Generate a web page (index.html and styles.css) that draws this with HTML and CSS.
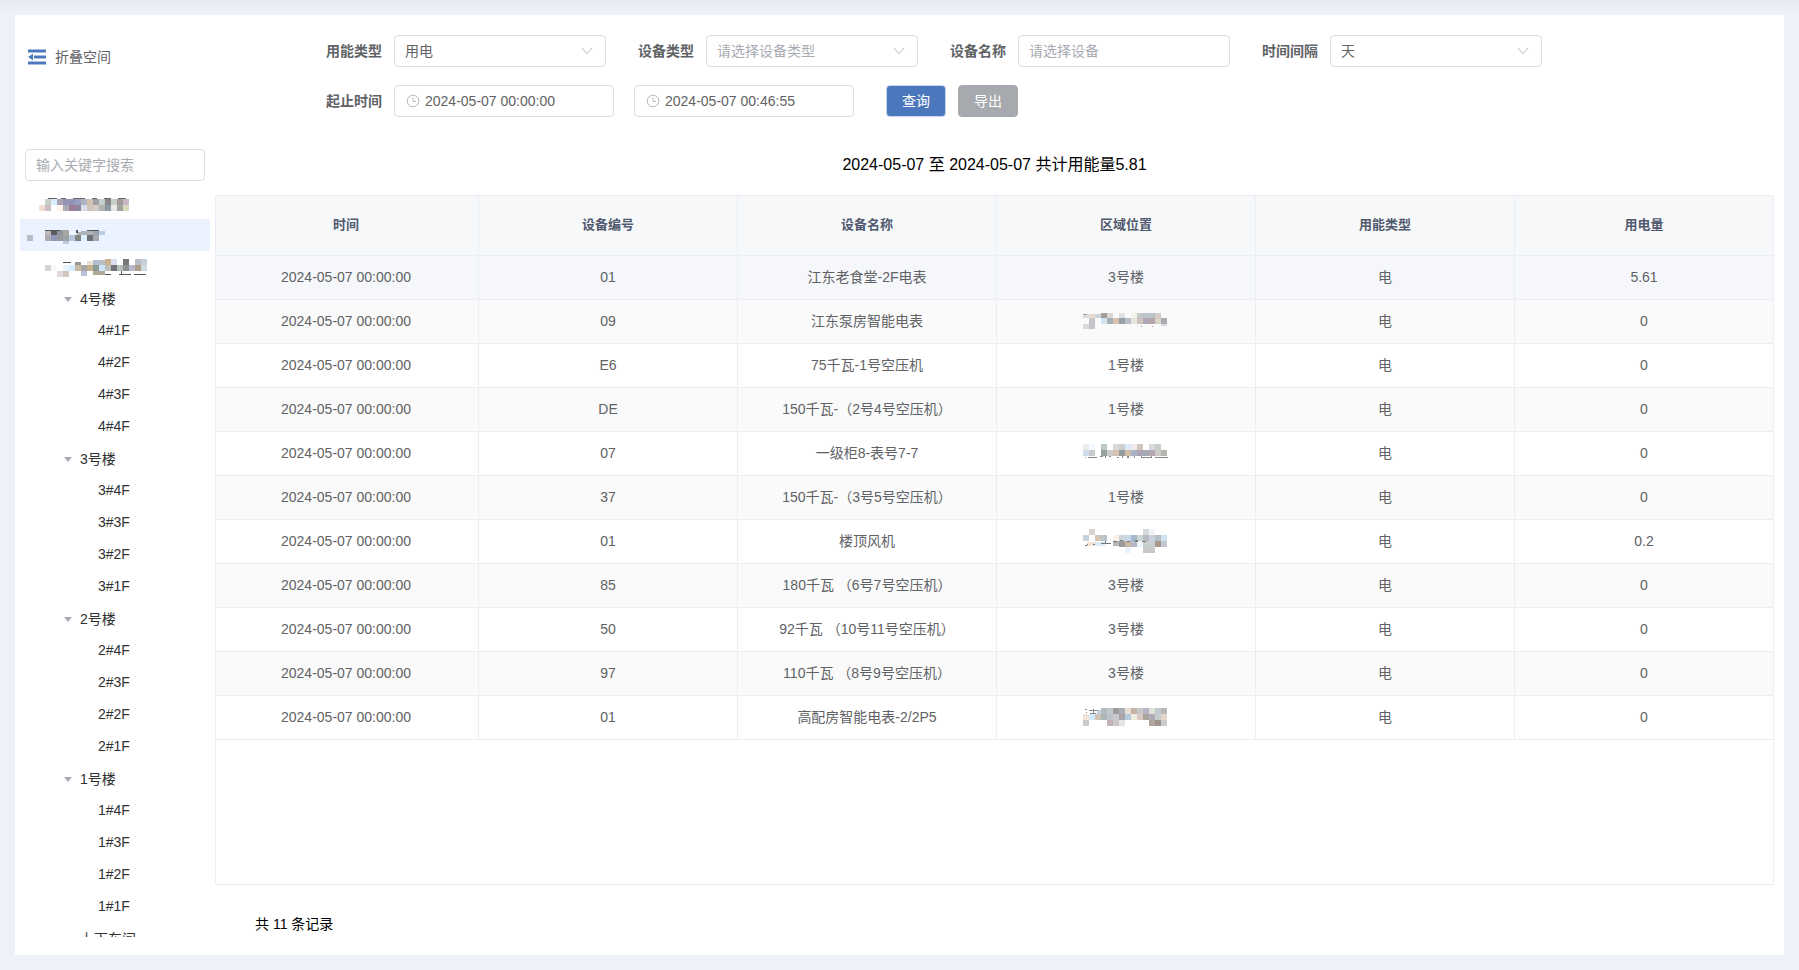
FILE: index.html
```html
<!DOCTYPE html>
<html lang="zh-CN">
<head>
<meta charset="utf-8">
<title>用能统计</title>
<link rel="stylesheet" href="styles.css">
</head>
<body>
<div class="card">
  <button class="fold" type="button">
    <svg class="fold-icon" width="18" height="16" viewBox="0 0 18 16" shape-rendering="crispEdges" aria-hidden="true">
      <path fill="#4b77bd" d="M0 1h18v2H0zM6 7h12v2H6zM0 13h18v2H0z"/>
      <path fill="#a9c0e3" d="M0 0h18v1H0zM0 3h18v1H0zM6 6h12v1H6zM6 9h12v1H6zM0 12h18v1H0zM0 15h18v1H0z"/>
      <path fill="#4b77bd" shape-rendering="auto" d="M0 8l5-3.2v6.4z"/>
    </svg>
    <span>折叠空间</span>
  </button>

  <form class="filters">
    <div class="filter-row">
      <div class="field">
        <label for="energy">用能类型</label>
        <span class="control select"><select id="energy"><option>用电</option></select>
          <svg class="chevron" viewBox="0 0 12 8"><path d="M1 1l5 5.5L11 1"/></svg></span>
      </div>
      <div class="field">
        <label for="kind">设备类型</label>
        <span class="control select"><select id="kind" class="empty"><option>请选择设备类型</option></select>
          <svg class="chevron" viewBox="0 0 12 8"><path d="M1 1l5 5.5L11 1"/></svg></span>
      </div>
      <div class="field">
        <label for="device">设备名称</label>
        <span class="control"><input id="device" type="text" placeholder="请选择设备"></span>
      </div>
      <div class="field">
        <label for="interval">时间间隔</label>
        <span class="control select"><select id="interval"><option>天</option></select>
          <svg class="chevron" viewBox="0 0 12 8"><path d="M1 1l5 5.5L11 1"/></svg></span>
      </div>
    </div>
    <div class="filter-row">
      <div class="field">
        <label for="start">起止时间</label>
        <span class="control date"><svg class="clock" viewBox="0 0 14 14"><circle cx="7" cy="7" r="5.8"/><path d="M7 3.5V7.5H10"/></svg>
          <input id="start" type="text" value="2024-05-07 00:00:00"></span>
        <span class="control date"><svg class="clock" viewBox="0 0 14 14"><circle cx="7" cy="7" r="5.8"/><path d="M7 3.5V7.5H10"/></svg>
          <input type="text" value="2024-05-07 00:46:55" aria-label="结束时间"></span>
      </div>
      <div class="actions">
        <button class="btn primary" type="button">查询</button>
        <button class="btn muted" type="button">导出</button>
      </div>
    </div>
  </form>

  <aside class="side">
    <input class="search" type="text" placeholder="输入关键字搜索" aria-label="输入关键字搜索">
    <ul class="tree">
      <li><svg class="mosaic" width="190" height="32" viewBox="0 0 190 32">
        <path fill="#666" d="M28 11h9v1h-9zM41 11h5v1h-5zM53 11h12v1H53zM72 11h5v1h-5zM84 11h7v1h-7zM98 11h8v1h-8z"/>
        <path fill="#c9cfc8" d="M25 12h6v6h-6zM91 12h6v6h-6z"/><path fill="#d9efff" d="M31 12h6v6h-6z"/><path fill="#a9a3b3" d="M37 12h6v6h-6z"/><path fill="#9793b5" d="M43 12h6v6h-6z"/><path fill="#8f94b8" d="M49 12h6v6h-6z"/><path fill="#979fbe" d="M55 12h6v6h-6z"/><path fill="#adb5c4" d="M61 12h6v6h-6z"/><path fill="#d3c1b3" d="M67 12h6v6h-6z"/><path fill="#9da1a4" d="M73 12h6v6h-6z"/><path fill="#c5cdcd" d="M79 12h6v6h-6z"/><path fill="#8a8689" d="M85 12h6v6h-6z"/><path fill="#a49a9a" d="M97 12h6v6h-6z"/><path fill="#c8b8c8" d="M103 12h6v6h-6z"/>
        <path fill="#f0ddd2" d="M19 18h6v6h-6z"/><path fill="#cbbfc4" d="M25 18h6v6h-6z"/><path fill="#fff3ea" d="M37 18h6v6h-6z"/><path fill="#acacb9" d="M43 18h6v6h-6z"/><path fill="#9f7b98" d="M49 18h6v6h-6z"/><path fill="#8f869b" d="M55 18h6v6h-6z"/><path fill="#d6dce8" d="M61 18h6v6h-6z"/><path fill="#cdc5ba" d="M67 18h6v6h-6z"/><path fill="#d5cbc6" d="M73 18h6v6h-6z"/><path fill="#b2b1b0" d="M79 18h6v6h-6z"/><path fill="#8b98a8" d="M85 18h6v6h-6z"/><path fill="#e9e8e4" d="M91 18h6v6h-6z"/><path fill="#9ea69f" d="M97 18h6v6h-6z"/><path fill="#d9dabb" d="M103 18h6v6h-6z"/>
      </svg></li>
      <li class="current"><svg class="mosaic" width="190" height="32" viewBox="0 0 190 32">
        <path fill="#b9bcc6" d="M7 16h6v6H7z"/><path fill="#bdb9b5" d="M25 11h6v5h-6z"/><path fill="#5c5c5e" d="M31 11h6v5h-6z"/><path fill="#8f94a0" d="M37 11h6v5h-6z"/><path fill="#a9a7a3" d="M43 11h6v5h-6z"/><path fill="#acb3ba" d="M57 13h4v3h-4zM61 12h12v4H61z"/><path fill="#9ba3ab" d="M73 12h6v4h-6z"/><path fill="#b9cee6" d="M79 12h6v4h-6z"/>
        <path fill="#abadb2" d="M25 16h6v6h-6z"/><path fill="#8f98b8" d="M31 16h6v6h-6z"/><path fill="#979a9d" d="M37 16h6v6h-6z"/><path fill="#9fa0a1" d="M43 16h6v6h-6z"/><path fill="#b5c6d8" d="M49 16h6v6h-6z"/><path fill="#7f8684" d="M55 16h6v6h-6z"/><path fill="#dcefff" d="M61 16h6v6h-6zM55 22h6v2h-6z"/><path fill="#6c7073" d="M67 16h6v6h-6z"/><path fill="#a3a8ae" d="M73 16h6v6h-6z"/><path fill="#bccbda" d="M43 22h6v3h-6z"/>
        <path fill="#555" d="M25 11h15v1H25zM56 11h2v3h-2zM67 11h12v1H67z"/>
      </svg></li>
      <li><svg class="mosaic" width="190" height="32" viewBox="0 0 190 32">
        <path fill="#555" d="M43 11h8v1h-8zM85 23h6v1h-6zM99 23h12v1H99zM114 23h12v1h-12zM101 20h1v4h-1z"/>
        <path fill="#9c9494" d="M55 11h6v3h-6z"/><path fill="#ece0d0" d="M67 10h6v4h-6z"/><path fill="#b0bfd0" d="M73 9h6v5h-6z"/><path fill="#b9bfc4" d="M79 9h6v5h-6zM115 8h6v6h-6z"/><path fill="#c9b08f" d="M85 8h6v6h-6z"/><path fill="#dcdff0" d="M91 8h6v6h-6z"/><path fill="#767878" d="M103 8h6v6h-6z"/><path fill="#c5cdd8" d="M121 8h6v6h-6z"/>
        <path fill="#d4d5d9" d="M25 14h6v6h-6z"/><path fill="#fafafa" d="M31 14h6v6h-6z"/><path fill="#e8f5ff" d="M43 14h6v6h-6z"/><path fill="#d4edff" d="M49 14h6v6h-6z"/><path fill="#c7b9a2" d="M55 14h6v6h-6z"/><path fill="#a6a7a4" d="M61 14h6v6h-6z"/><path fill="#c5b090" d="M67 14h6v6h-6z"/><path fill="#8d9994" d="M73 14h6v6h-6z"/><path fill="#cde3fa" d="M79 14h6v6h-6z"/><path fill="#bfbeb8" d="M85 14h6v6h-6z"/><path fill="#707278" d="M91 14h6v6h-6z"/><path fill="#b3c0b9" d="M97 14h6v6h-6z"/><path fill="#8a9190" d="M103 14h6v6h-6z"/><path fill="#bcb6cb" d="M109 14h6v6h-6z"/><path fill="#aaa08d" d="M115 14h6v6h-6z"/><path fill="#cedadd" d="M121 14h6v6h-6z"/>
        <path fill="#e2d8dc" d="M37 20h6v6h-6z"/><path fill="#cfc7bf" d="M43 20h6v6h-6z"/><path fill="#b9c0d3" d="M61 20h6v5h-6z"/><path fill="#b0a898" d="M73 20h12v4H73z"/>
      </svg></li>
      <li class="branch"><span class="caret"></span>4号楼</li>
      <li class="leaf">4#1F</li>
      <li class="leaf">4#2F</li>
      <li class="leaf">4#3F</li>
      <li class="leaf">4#4F</li>
      <li class="branch"><span class="caret"></span>3号楼</li>
      <li class="leaf">3#4F</li>
      <li class="leaf">3#3F</li>
      <li class="leaf">3#2F</li>
      <li class="leaf">3#1F</li>
      <li class="branch"><span class="caret"></span>2号楼</li>
      <li class="leaf">2#4F</li>
      <li class="leaf">2#3F</li>
      <li class="leaf">2#2F</li>
      <li class="leaf">2#1F</li>
      <li class="branch"><span class="caret"></span>1号楼</li>
      <li class="leaf">1#4F</li>
      <li class="leaf">1#3F</li>
      <li class="leaf">1#2F</li>
      <li class="leaf">1#1F</li>
      <li class="branch"><span class="caret none"></span>上下车间</li>
    </ul>
  </aside>

  <main class="main">
    <h1 class="summary">2024-05-07 至 2024-05-07 共计用能量5.81</h1>
    <div class="table-box">
      <table class="table">
        <colgroup><col class="col-time"><col><col><col><col><col></colgroup>
        <thead><tr><th>时间</th><th>设备编号</th><th>设备名称</th><th>区域位置</th><th>用能类型</th><th>用电量</th></tr></thead>
        <tbody>
          <tr class="hover"><td>2024-05-07 00:00:00</td><td>01</td><td>江东老食堂-2F电表</td><td>3号楼</td><td>电</td><td>5.61</td></tr>
          <tr><td>2024-05-07 00:00:00</td><td>09</td><td>江东泵房智能电表</td><td><svg class="mosaic" width="86" height="24" viewBox="0 0 86 24">
            <path fill="#d8dde2" d="M0 5h6v4H0z"/><path fill="#ead9d0" d="M6 5h6v4H6z"/><path fill="#ccd3dc" d="M12 5h6v4h-6z"/><path fill="#a59c9c" d="M18 4h6v5h-6z"/><path fill="#d8d8d2" d="M24 4h6v5h-6z"/><path fill="#e2e2e4" d="M36 4h6v5h-6z"/><path fill="#f7f2e8" d="M48 4h6v5h-6z"/><path fill="#c5c8c6" d="M54 4h6v5h-6z"/><path fill="#bcc4ca" d="M60 4h12v5H60z"/><path fill="#d3cdc8" d="M72 4h6v5h-6z"/>
            <path fill="#c5c6ca" d="M6 9h6v11H6z"/><path fill="#d3e3ef" d="M18 9h6v6h-6z"/><path fill="#a6b1b6" d="M24 9h6v6h-6z"/><path fill="#d8c2b2" d="M30 9h6v6h-6z"/><path fill="#979fa8" d="M36 9h6v6h-6z"/><path fill="#b9bec8" d="M42 9h6v6h-6z"/><path fill="#e3e5dc" d="M48 9h6v6h-6z"/><path fill="#d0c3bf" d="M54 9h6v6h-6z"/><path fill="#ada7b8" d="M60 9h6v6h-6z"/><path fill="#b5a5ab" d="M66 9h6v6h-6z"/><path fill="#d8d6c9" d="M72 9h6v6h-6z"/><path fill="#a9aab0" d="M78 9h6v6h-6z"/><path fill="#d8d8dc" d="M0 15h6v5H0zM78 15h6v2h-6z"/><path fill="#999" d="M0 5h4v1H0zM58 17h1v1h-1zM69 17h1v1h-1z"/>
          </svg></td><td>电</td><td>0</td></tr>
          <tr><td>2024-05-07 00:00:00</td><td>E6</td><td>75千瓦-1号空压机</td><td>1号楼</td><td>电</td><td>0</td></tr>
          <tr><td>2024-05-07 00:00:00</td><td>DE</td><td>150千瓦-（2号4号空压机）</td><td>1号楼</td><td>电</td><td>0</td></tr>
          <tr><td>2024-05-07 00:00:00</td><td>07</td><td>一级柜8-表号7-7</td><td><svg class="mosaic" width="86" height="24" viewBox="0 0 86 24">
            <path fill="#ededE8" d="M0 3h6v6H0z"/><path fill="#f4faff" d="M6 3h6v6H6z"/><path fill="#bcc8cc" d="M18 3h6v6h-6z"/><path fill="#d5d8d8" d="M30 3h6v6h-6z"/><path fill="#cfd0d2" d="M36 3h6v6h-6z"/><path fill="#dceaf6" d="M42 3h6v6h-6z"/><path fill="#f0ecee" d="M48 3h6v6h-6z"/><path fill="#d3c4c0" d="M54 3h6v6h-6z"/><path fill="#d4dae2" d="M66 3h6v6h-6z"/><path fill="#cbcccc" d="M72 3h6v6h-6z"/>
            <path fill="#d0dceb" d="M0 9h6v6H0z"/><path fill="#c8cacd" d="M6 9h6v6H6z"/><path fill="#9aa0a0" d="M18 9h6v6h-6z"/><path fill="#cbcbcc" d="M24 9h6v6h-6z"/><path fill="#d5c2b3" d="M30 9h6v6h-6z"/><path fill="#9599a0" d="M36 9h6v6h-6z"/><path fill="#d0bda8" d="M42 9h6v6h-6z"/><path fill="#a9b2c8" d="M48 9h6v6h-6z"/><path fill="#ada5b6" d="M54 9h6v6h-6z"/><path fill="#a9a8b6" d="M60 9h6v6h-6z"/><path fill="#b5a8b0" d="M66 9h6v6h-6z"/><path fill="#c9cac9" d="M72 9h6v6h-6z"/><path fill="#b3b7b0" d="M78 9h6v6h-6z"/>
            <path fill="#888" d="M2 16h1v1H2zM5 16h9v1H5zM17 15h3v1h-3zM22 15h1v2h-1zM26 15h2v1h-2zM34 16h2v1h-2zM39 15h1v2h-1zM44 15h2v2h-2zM51 15h1v2h-1zM58 15h1v2h-1zM59 16h9v1h-9zM68 15h1v2h-1zM72 16h13v1H72z"/>
          </svg></td><td>电</td><td>0</td></tr>
          <tr><td>2024-05-07 00:00:00</td><td>37</td><td>150千瓦-（3号5号空压机）</td><td>1号楼</td><td>电</td><td>0</td></tr>
          <tr><td>2024-05-07 00:00:00</td><td>01</td><td>楼顶风机</td><td><svg class="mosaic" width="86" height="24" viewBox="0 0 86 24">
            <path fill="#dad4cc" d="M6 0h6v6H6z"/><path fill="#d5d8dc" d="M60 0h6v6h-6z"/><path fill="#f3f3f6" d="M66 0h6v6h-6z"/><path fill="#c8d2db" d="M0 6h6v6H0z"/><path fill="#d5c3b3" d="M12 6h6v6h-6z"/><path fill="#b9c3ca" d="M18 6h6v6h-6z"/><path fill="#fbf2e6" d="M30 6h6v6h-6z"/><path fill="#c9d6dc" d="M36 6h6v6h-6z"/><path fill="#c8d8e6" d="M42 6h6v6h-6z"/><path fill="#a5b8cc" d="M48 6h6v6h-6z"/><path fill="#ccd6d6" d="M54 6h6v6h-6z"/><path fill="#b8bcc2" d="M60 6h6v6h-6z"/><path fill="#c8d0dc" d="M66 6h6v6h-6z"/><path fill="#b3c0c8" d="M72 6h6v6h-6z"/><path fill="#d0e4f0" d="M78 6h6v6h-6z"/>
            <path fill="#f5e4d6" d="M4 13h8v4H4z"/><path fill="#dcebfa" d="M12 13h10v4H12z"/><path fill="#b6b6b8" d="M30 12h6v5h-6z"/><path fill="#9c9c9e" d="M36 12h6v6h-6z"/><path fill="#c9b4a0" d="M42 12h6v6h-6z"/><path fill="#b3b8c6" d="M48 12h6v6h-6z"/><path fill="#eef4f8" d="M54 12h6v6h-6z"/><path fill="#c8d0cc" d="M60 12h6v6h-6z"/><path fill="#ccd0d4" d="M66 12h6v6h-6z"/><path fill="#a8988e" d="M72 12h6v6h-6z"/><path fill="#c0c8d4" d="M78 12h6v6h-6z"/><path fill="#eaf4ff" d="M42 18h6v6h-6z"/><path fill="#c9c9cb" d="M60 18h12v6H60z"/>
            <path fill="#777" d="M2 16h2v1H2zM4 15h1v1H4zM10 15h2v1h-2zM18 14h10v1H18zM22 12h1v2h-1zM30 12h4v1h-4zM37 11h3v1h-3zM44 12h3v1h-3zM52 11h3v2h-3zM59 12h4v1h-4z"/>
          </svg></td><td>电</td><td>0.2</td></tr>
          <tr><td>2024-05-07 00:00:00</td><td>85</td><td>180千瓦 （6号7号空压机）</td><td>3号楼</td><td>电</td><td>0</td></tr>
          <tr><td>2024-05-07 00:00:00</td><td>50</td><td>92千瓦 （10号11号空压机）</td><td>3号楼</td><td>电</td><td>0</td></tr>
          <tr><td>2024-05-07 00:00:00</td><td>97</td><td>110千瓦 （8号9号空压机）</td><td>3号楼</td><td>电</td><td>0</td></tr>
          <tr><td>2024-05-07 00:00:00</td><td>01</td><td>高配房智能电表-2/2P5</td><td><svg class="mosaic" width="86" height="24" viewBox="0 0 86 24">
            <path fill="#c0d0dc" d="M14 5h4v4h-4z"/><path fill="#b3bcc0" d="M18 3h6v6h-6z"/><path fill="#c5c6c8" d="M24 3h6v6h-6z"/><path fill="#9c9c9c" d="M30 3h6v6h-6z"/><path fill="#acaeb2" d="M36 3h6v6h-6z"/><path fill="#e8e0d8" d="M42 3h6v6h-6z"/><path fill="#c4b4a8" d="M48 3h6v6h-6z"/><path fill="#c8c8ca" d="M54 3h6v6h-6z"/><path fill="#b9b3c4" d="M60 3h6v6h-6z"/><path fill="#dce4dc" d="M66 3h6v6h-6z"/><path fill="#c0c8d0" d="M72 3h6v6h-6z"/><path fill="#b8b9b6" d="M78 3h6v6h-6z"/>
            <path fill="#f3e4d8" d="M0 9h6v6H0z"/><path fill="#d4eaff" d="M6 9h6v6H6z"/><path fill="#d3c3b6" d="M12 9h6v6h-6z"/><path fill="#acb8b8" d="M18 9h6v6h-6z"/><path fill="#bcc4cc" d="M24 9h6v6h-6z"/><path fill="#c8c8ca" d="M30 9h6v12h-6z"/><path fill="#a9a4a8" d="M36 9h6v6h-6z"/><path fill="#b4cad8" d="M42 9h6v6h-6z"/><path fill="#ecece0" d="M48 9h6v6h-6z"/><path fill="#dccac4" d="M54 9h6v6h-6z"/><path fill="#a8a4a0" d="M60 9h6v6h-6z"/><path fill="#b0acb6" d="M66 9h6v6h-6z"/><path fill="#c9cccc" d="M72 9h6v6h-6z"/><path fill="#e4d6cc" d="M78 9h6v6h-6z"/>
            <path fill="#c8cacd" d="M0 15h6v6H0zM78 15h6v6h-6z"/><path fill="#c4b0b6" d="M24 15h6v6h-6z"/><path fill="#e8e4e4" d="M36 15h6v6h-6z"/><path fill="#b4a4a0" d="M66 15h6v6h-6z"/><path fill="#a09490" d="M72 15h6v6h-6z"/>
            <path fill="#888" d="M2 4h2v1H2zM3 7h1v1H3zM6 5h8v1H6zM10 4h1v5h-1zM7 8h6v1H7z"/>
          </svg></td><td>电</td><td>0</td></tr>
        </tbody>
      </table>
    </div>
    <p class="total">共 11 条记录</p>
  </main>
</div>
</body>
</html>
```
FILE: styles.css
```css
* { box-sizing: border-box; }

body {
  margin: 0;
  height: 100vh;
  padding: 15px;
  background: linear-gradient(#e6eaf2, #eef1fa 14px) no-repeat #eef1fa;
  font: 14px/20px "Liberation Sans", "Noto Sans CJK SC", sans-serif;
  color: #606266;
}

input, select, button { font: inherit; color: inherit; }

.card {
  height: 100%;
  padding: 0 10px 0 5px;
  background: #fff;
  display: grid;
  grid-template-columns: 190px minmax(0, 1fr);
  grid-template-rows: auto minmax(0, 1fr);
  column-gap: 5px;
}

.fold {
  align-self: start;
  display: flex;
  align-items: center;
  gap: 9px;
  margin-top: 32px;
  padding: 0 0 0 8px;
  border: 0;
  background: none;
}

.filters {
  display: flex;
  flex-direction: column;
  gap: 18px;
  padding: 20px 0 32px 111px;
}

.filter-row { display: flex; flex-wrap: wrap; gap: 18px 32px; }
.field { display: flex; align-items: center; }
.field label { padding-right: 12px; font-weight: 700; }

.control { position: relative; display: block; width: 212px; }
.control.date { width: 220px; }
.control.date + .control.date { margin-left: 20px; }

.control input, .control select, .search {
  display: block;
  width: 100%;
  height: 32px;
  padding: 0 10px;
  border: 1px solid #dcdfe6;
  border-radius: 4px;
  background: #fff;
  outline: 0;
}
.control select { appearance: none; }
.control select.empty, input::placeholder { color: #a8abb2; opacity: 1; }
.control.date input { padding-left: 30px; }

.chevron, .clock { position: absolute; fill: none; stroke: #b4b8c0; pointer-events: none; }
.chevron { right: 13px; top: 12px; width: 12px; height: 8px; }
.clock { left: 12px; top: 9px; width: 14px; height: 14px; }

.actions { display: flex; gap: 12px; }
.btn { width: 60px; height: 32px; padding: 0; border: 1px solid; border-radius: 4px; color: #fff; font-weight: 400; }
.btn.primary { background: #4b77bd; border-color: #c9d6eb; }
.btn.muted { background: #a6a9ad; border-color: #a6a9ad; }

.side { display: flex; flex-direction: column; min-height: 0; padding-bottom: 18px; }
.search { width: 180px; margin: 0 0 6px 5px; flex: none; }

.tree {
  flex: 1;
  min-height: 0;
  margin: 0;
  padding: 0;
  list-style: none;
  overflow-y: auto;
  scrollbar-width: none;
  color: #303133;
}
.tree li { display: flex; align-items: center; height: 32px; }
.tree .current { background: #eaf3ff; }
.tree .branch { padding-left: 36px; }
.tree .leaf { padding: 0 0 2px 78px; }
.caret { display: flex; justify-content: center; width: 24px; }
.caret::before { content: ""; margin-right: 1px; border: 4px solid transparent; border-top: 5px solid #a8abb2; border-bottom: 0; }
.caret.none::before { display: none; }

.mosaic { display: block; margin: 0 auto; shape-rendering: crispEdges; }

.main { display: flex; flex-direction: column; min-height: 0; }
.summary { margin: 0 0 14px; font-size: 16px; line-height: 32px; font-weight: 400; color: #000; text-align: center; }

/* The last column's right border slides under the frame of the box. */
.table-box { flex: 1; min-height: 0; border: 1px solid #ebeef5; overflow: hidden auto; }
.table { width: calc(100% + 1px); table-layout: fixed; border-spacing: 0; text-align: center; }
.col-time { width: 263px; }
.table th, .table td { padding: 0 0 2px; border: solid #ebeef5; border-width: 0 1px 1px 0; }
.table th:first-child, .table td:first-child { padding-right: 2px; }
.table th { height: 60px; font-size: 13px; background: #f7f8fa; color: #515a6e; }
.table td { height: 44px; }
.table tbody tr:nth-child(even) { background: #fafafa; }
.table .hover { background: #f5f7fa; }

.total { margin: 0; padding: 25px 40px 17px; line-height: 28px; color: #000; }
```
